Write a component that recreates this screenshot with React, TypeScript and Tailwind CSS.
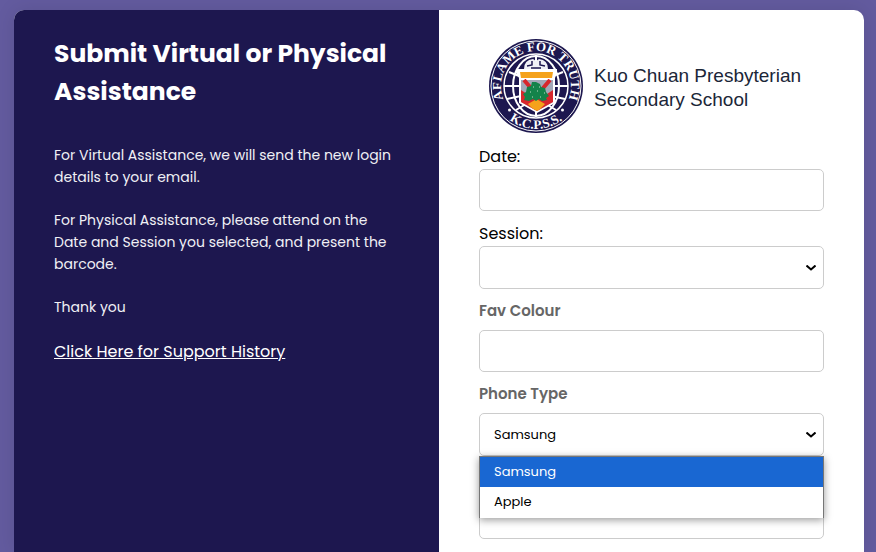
import { useState, type SelectHTMLAttributes } from 'react';

const PHONE_TYPES = ['Samsung', 'Apple'];

const FIELD = 'block w-full rounded-[5px] border border-[#ccc] bg-white text-[13px] text-black focus:outline-none';

function SchoolCrest() {
  return (
    <svg className="w-24 h-24 shrink-0" viewBox="0 0 96 96" role="img" aria-label="School crest">
      <defs>
        <path id="crest-top" d="M 17.7 65.5 A 35 35 0 1 1 78.3 65.5" />
        <path id="crest-bottom" d="M 10 68 A 43 43 0 0 0 86 68" />
        <clipPath id="crest-shield">
          <path d="M33 41h32v23l-16 9-16-9z" />
        </clipPath>
      </defs>
      <circle cx="48" cy="48" r="47" fill="#1d174f" />
      <circle cx="48" cy="48" r="45" fill="none" stroke="#fff" strokeWidth="1" />
      <circle cx="48" cy="48" r="32" fill="#1d174f" stroke="#fff" strokeWidth="1.500" />
      {/* Globe lines */}
      <g fill="none" stroke="#fff" strokeWidth="2">
        <ellipse cx="48" cy="48" rx="23" ry="30" />
        <path d="M48 17v62M16 48h64M21 34l10 4M75 34l-10 4M19 61l14-3M77 61l-14-3M28 72l10-6M68 72l-10-6" />
      </g>
      <path d="M36 31q0-9 9-10l3 2 3-2q9 1 9 10z" fill="#f1f1f6" />
      <path d="M44 23v4l-5 1M52 23v4l5 1M43 30h10" fill="none" stroke="#1d174f" strokeWidth="1.500" />
      {/* Shield */}
      <path d="M28 31h41v4l-2 5v25l-18 10-18-10V40l-3-5z" fill="#fff" />
      <path d="M32 34h33l-1 6H33z" fill="#f5a21b" />
      <g clipPath="url(#crest-shield)">
        <path d="M33 42h32v32H33z" fill="#a3a8b8" />
        <path d="M33 52l6 4h20l6-4v22H33z" fill="#d8262c" />
        <path d="M36 42l12 14M62 42L50 56" stroke="#d8262c" strokeWidth="4" />
        <path d="M40 66l8.500-5L57 66l-8.500 9z" fill="#f5a21b" />
      </g>
      <path
        d="M48 44l4 2 1 3 4 1 1 4 3 4-3 2 1 2-5 1-3-2-3 2-3-2-4 2-5-1 1-3-2-3 3-2 1-5 4-1 1-4z"
        fill="#14834a"
      />
      <path d="M45 49h1m5 0h1m-10 5h1m6-1h1m6 2h1m-13 4h1m7 0h1" stroke="#b9dfc5" strokeWidth="1" />
      <circle cx="21.500" cy="72" r="1.500" fill="#fff" />
      <circle cx="74.500" cy="72" r="1.500" fill="#fff" />
      <g fill="#fff" fontFamily='"Liberation Serif", serif' fontWeight="bold">
        <text fontSize="13">
          <textPath href="#crest-top" startOffset="50%" textAnchor="middle">
            AFLAME FOR TRUTH
          </textPath>
        </text>
        <text fontSize="13">
          <textPath href="#crest-bottom" startOffset="50%" textAnchor="middle">
            K.C.P.S.S.
          </textPath>
        </text>
      </g>
    </svg>
  );
}

function Select({ children, ...props }: SelectHTMLAttributes<HTMLSelectElement>) {
  return (
    <div className="relative">
      <select {...props} className={`${FIELD} h-[43px] appearance-none pl-3.5 pr-8`}>
        {children}
      </select>
      <svg
        className="pointer-events-none absolute right-2 top-1/2 h-1.5 w-2.5 -translate-y-1/2"
        viewBox="0 0 10 6"
        fill="none"
        stroke="#000"
        strokeWidth="2"
      >
        <path d="M0.500 0.500L5 4.500L9.500 0.500" />
      </svg>
    </div>
  );
}

export default function App() {
  const [phone, setPhone] = useState('Samsung');
  const [open, setOpen] = useState(true);

  const choosePhone = (value: string) => {
    setPhone(value);
    setOpen(false);
  };

  return (
    <div className="min-h-screen bg-[#635b9f] pl-3.5 pr-3 pt-2.5 font-[Poppins,Inter,sans-serif]">
      <div className="mx-auto grid max-w-[850px] min-h-[calc(100vh-10px)] grid-cols-2 overflow-hidden rounded-t-[10px] bg-white shadow-[0_0_20px_rgba(0,0,0,0.1)]">
        {/* Info */}
        <section className="bg-[#1d174f] px-10 pt-[25px] text-white">
          <h1 className="text-[25px] leading-[38px] font-bold">Submit Virtual or Physical Assistance</h1>
          <div className="mt-[33px] space-y-[21px] text-sm leading-[22px] text-[#f0f0f5]">
            <p>For Virtual Assistance, we will send the new login details to your email.</p>
            <p>For Physical Assistance, please attend on the Date and Session you selected, and present the barcode.</p>
            <p>Thank you</p>
          </div>
          <a href="#history" className="mt-[22px] inline-block text-base leading-6 underline">
            Click Here for Support History
          </a>
        </section>

        {/* Form */}
        <form className="px-10 pt-7 pb-3 text-black" onSubmit={(e) => e.preventDefault()}>
          <div className="flex items-center gap-2.5 pl-[9px]">
            <SchoolCrest />
            <p className="whitespace-nowrap pt-1 font-['Liberation_Sans',sans-serif] text-[19px] leading-6 text-[#1b2638]">
              Kuo Chuan Presbyterian
              <br />
              Secondary School
            </p>
          </div>

          <label htmlFor="date" className="mt-[11px] block text-base leading-6">Date:</label>
          <input id="date" type="text" className={`${FIELD} h-[42px] px-3.5`} />

          <label htmlFor="session" className="mt-[11px] block text-base leading-6">Session:</label>
          <Select id="session" defaultValue="">
            <option value="" />
          </Select>

          <label htmlFor="colour" className="mt-2.5 mb-[7px] block text-[15px] leading-6 font-semibold text-[#666]">
            Fav Colour
          </label>
          <input id="colour" type="text" className={`${FIELD} h-[42px] px-3.5`} />

          <label htmlFor="phone" className="mt-2.5 mb-[7px] block text-[15px] leading-6 font-semibold text-[#666]">
            Phone Type
          </label>
          <div className="relative">
            <Select id="phone" value={phone} onChange={(e) => setPhone(e.target.value)}>
              {PHONE_TYPES.map((type) => (
                <option key={type}>{type}</option>
              ))}
            </Select>
            {open && (
              <div className="absolute inset-x-0 top-full z-10 border-x border-t border-[#767676] bg-white pb-px shadow-[0_2px_8px_rgba(0,0,0,0.4)]">
                {PHONE_TYPES.map((type) => (
                  <button
                    key={type}
                    type="button"
                    onClick={() => choosePhone(type)}
                    className={`block h-[30px] w-full px-3.5 text-left text-[13px] ${
                      type === phone ? 'bg-[#1967d2] text-white' : 'bg-white text-black'
                    }`}
                  >
                    {type}
                  </button>
                ))}
              </div>
            )}
          </div>

          <input type="text" aria-label="Phone details" className={`${FIELD} mt-[41px] h-[42px] px-3.5`} />
        </form>
      </div>
    </div>
  );
}
